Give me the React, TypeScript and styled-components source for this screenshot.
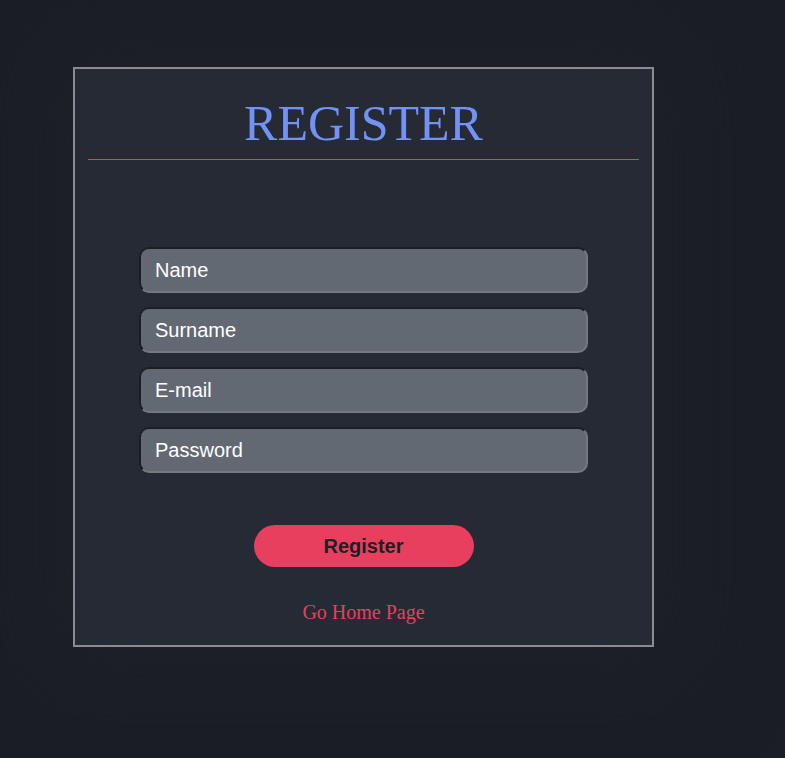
import React from "react";
import styled, { createGlobalStyle } from "styled-components";

const Global = createGlobalStyle`
  html, body {
    margin: 0;
    padding: 0;
    background: #1b1e25;
    min-height: 100%;
  }
  body {
    font-family: "Liberation Serif", "Times New Roman", serif;
  }
  * { box-sizing: border-box; }
`;

const Page = styled.div`
  min-height: 758px;
  padding: 67px 0 0 73px;
  background: #1b1e25;
`;

const Card = styled.div`
  width: 581px;
  border: 2px solid #8a8c91;
  background: #252a34;
  box-shadow: 0 0 90px 30px rgba(31, 34, 42, 0.75);
  padding: 25px 13px 21px;
  display: flex;
  flex-direction: column;
  align-items: stretch;
`;

const Header = styled.div`
  border-bottom: 1px solid #e83f5f;
  padding-bottom: 7px;
  text-align: center;
`;

const Title = styled.h1`
  margin: 0;
  font-family: "Liberation Serif", "Times New Roman", serif;
  font-weight: 400;
  font-size: 50px;
  line-height: normal;
  color: #7293f4;
`;

const Form = styled.form`
  display: flex;
  flex-direction: column;
  align-items: center;
  padding-top: 87px;
`;

const Fields = styled.div`
  display: flex;
  flex-direction: column;
  gap: 14px;
`;

const Input = styled.input`
  width: 449px;
  height: 46px;
  border: 2px solid;
  border-color: #1c1f24 #75787d #75787d #1c1f24;
  border-radius: 10px;
  background: #626973;
  color: #ffffff;
  font-family: "Liberation Sans", Arial, sans-serif;
  font-size: 20px;
  padding: 0 14px;
  outline: none;
  &::placeholder {
    color: #ffffff;
    opacity: 1;
  }
`;

const Button = styled.button`
  margin-top: 52px;
  width: 220px;
  height: 42px;
  border: none;
  border-radius: 21px;
  background: #e83f5f;
  color: #1c1f26;
  font-family: "Liberation Sans", Arial, sans-serif;
  font-weight: 700;
  font-size: 20px;
  cursor: pointer;
`;

const HomeLink = styled.a`
  margin-top: 34px;
  font-family: "Liberation Serif", "Times New Roman", serif;
  font-size: 20px;
  line-height: normal;
  color: #e83f5f;
  text-decoration: none;
`;

export default function App() {
  return (
    <>
      <Global />
      <Page>
        <Card>
          <Header>
            <Title>REGISTER</Title>
          </Header>
          <Form onSubmit={(e) => e.preventDefault()}>
            <Fields>
              <Input type="text" placeholder="Name" />
              <Input type="text" placeholder="Surname" />
              <Input type="email" placeholder="E-mail" />
              <Input type="password" placeholder="Password" />
            </Fields>
            <Button type="submit">Register</Button>
            <HomeLink href="#">Go Home Page</HomeLink>
          </Form>
        </Card>
      </Page>
    </>
  );
}
